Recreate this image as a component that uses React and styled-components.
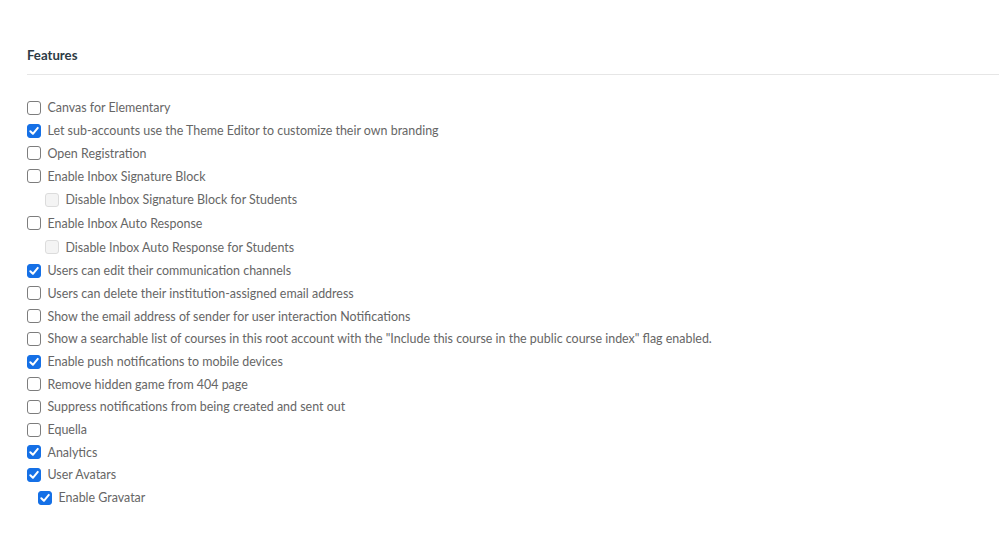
import styled, { createGlobalStyle } from "styled-components";

const Global = createGlobalStyle`
  body {
    margin: 0;
    background: #fff;
    font-family: Lato, "Open Sans", sans-serif;
  }
`;

const features = [
  { label: "Canvas for Elementary" },
  { label: "Let sub-accounts use the Theme Editor to customize their own branding", checked: true },
  { label: "Open Registration" },
  { label: "Enable Inbox Signature Block" },
  { label: "Disable Inbox Signature Block for Students", level: 2, disabled: true },
  { label: "Enable Inbox Auto Response" },
  { label: "Disable Inbox Auto Response for Students", level: 2, disabled: true },
  { label: "Users can edit their communication channels", checked: true },
  { label: "Users can delete their institution-assigned email address" },
  { label: "Show the email address of sender for user interaction Notifications" },
  { label: 'Show a searchable list of courses in this root account with the "Include this course in the public course index" flag enabled.' },
  { label: "Enable push notifications to mobile devices", checked: true },
  { label: "Remove hidden game from 404 page" },
  { label: "Suppress notifications from being created and sent out" },
  { label: "Equella" },
  { label: "Analytics", checked: true },
  { label: "User Avatars", checked: true },
  { label: "Enable Gravatar", checked: true, level: 1 },
];

function Features() {
  return (
    <Section>
      <Heading>Features</Heading>
      <List>
        {features.map((f) => (
          <Row key={f.label} $level={f.level || 0}>
            <Box $checked={f.checked} $disabled={f.disabled}>
              {f.checked && (
                <svg width="12" height="12" viewBox="0 0 12 12">
                  <path d="M2.3 6.2 L4.9 8.8 L9.8 2.9" fill="none" stroke="#fff" strokeWidth="2" strokeLinecap="round" strokeLinejoin="round" />
                </svg>
              )}
            </Box>
            <Label>{f.label}</Label>
          </Row>
        ))}
      </List>
    </Section>
  );
}

export default function App() {
  return (
    <>
      <Global />
      <Features />
    </>
  );
}

const Section = styled.div`
  padding: 45px 0 0 27px;
`;

const Heading = styled.h2`
  margin: 0;
  font-size: 13.2px;
  line-height: 20px;
  font-weight: 700;
  color: #2d3b45;
  padding-bottom: 9px;
  border-bottom: 1px solid #e6e6e6;
`;

const List = styled.div`
  margin-top: 21.6px;
  display: flex;
  flex-direction: column;
`;

const Row = styled.label`
  display: flex;
  align-items: center;
  gap: 6.5px;
  height: ${(p) => (p.$level === 2 ? "24.7px" : "22.7px")};
  padding-left: ${(p) => (p.$level === 2 ? "18px" : p.$level === 1 ? "11px" : "0")};
`;

const Box = styled.span`
  box-sizing: border-box;
  width: 14px;
  height: 14px;
  flex: none;
  display: flex;
  align-items: center;
  justify-content: center;
  border-radius: 3px;
  border: 1px solid ${(p) => (p.$checked ? "#1570e6" : p.$disabled ? "#dcdcdc" : "#7d7d7d")};
  background: ${(p) => (p.$checked ? "#1570e6" : p.$disabled ? "#f4f4f4" : "#fff")};
`;

const Label = styled.span`
  font-size: 12.45px;
  color: #666;
  white-space: nowrap;
`;
